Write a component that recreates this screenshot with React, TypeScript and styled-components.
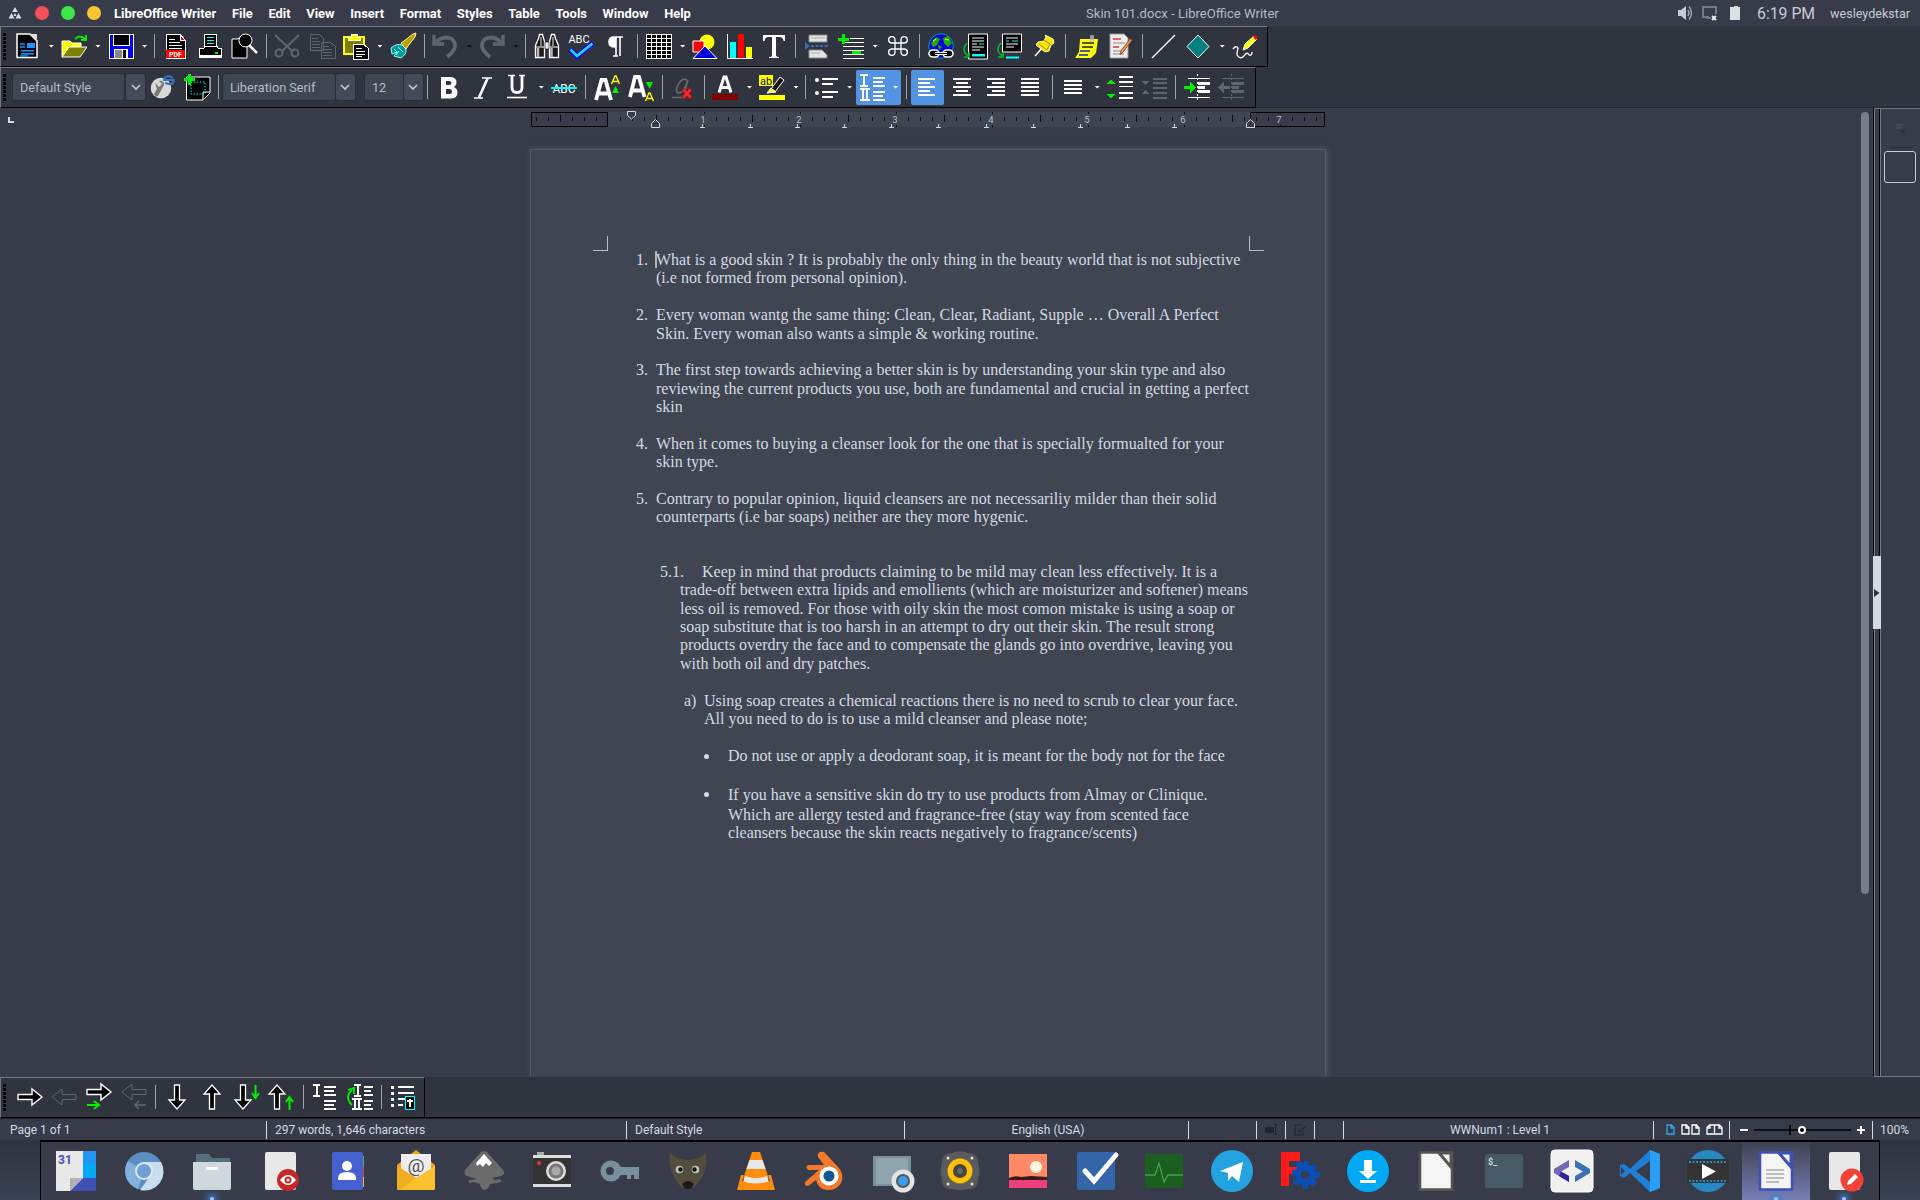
import React from "react";
import styled, { createGlobalStyle, css } from "styled-components";

const Global = createGlobalStyle`
  * { box-sizing: border-box; }
  body { margin: 0; background: #383c4a; overflow: hidden; }
  svg { display: block; flex: none; overflow: visible; }
`;

const ui = css`font-family: Roboto, "Noto Sans", sans-serif;`;

const Screen = styled.div`
  ${ui}
  width: 1920px;
  height: 1200px;
  display: flex;
  flex-direction: column;
  background: #383c4a;
  color: #d3dae3;
  font-size: 12px;
  overflow: hidden;
`;

/* ---------- top panel ---------- */
const Panel = styled.header`
  height: 26px;
  flex: none;
  display: flex;
  align-items: center;
  padding: 0 7px 0 8px;
`;
const Logo = styled.svg`
  width: 14px;
  height: 12px;
  margin-right: 13px;
`;
const Light = styled.i<{ $c: string }>`
  width: 14px;
  height: 14px;
  border-radius: 50%;
  margin-right: 12px;
  background: ${(p) => p.$c};
`;
const Menu = styled.nav`
  display: flex;
  justify-content: space-between;
  width: 577px;
  margin-left: 1px;
  font-weight: 700;
  color: #fff;
  font-size: 12.9px;
  white-space: nowrap;
`;
const Title = styled.div`
  width: 196px;
  margin-left: 395px;
  font-size: 13.1px;
  color: #b4bac6;
  white-space: nowrap;
`;
const Tray = styled.div`
  margin-left: auto;
  display: flex;
  align-items: center;
  color: #c5cad4;
`;
const Clock = styled.span`
  font-size: 15.8px;
  width: 58px;
  margin: 0 15px 0 16px;
  white-space: nowrap;
`;
const User = styled.span`
  font-size: 12.6px;
  width: 83px;
  white-space: nowrap;
`;

/* ---------- toolbars ---------- */
const ToolArea = styled.div`
  flex: none;
  background: #2f343f;
  border-bottom: 1px solid #21252b;
  height: 82px;
`;
const Bar = styled.div<{ $w: number; $gap?: number }>`
  width: ${(p) => p.$w}px;
  height: 41px;
  display: flex;
  align-items: center;
  gap: ${(p) => p.$gap ?? 0}px;
  padding-bottom: 1px;
  background: #2f343f;
  border: 1px solid #000;
  border-top-color: #747883;
  border-left-color: #747883;
`;
const Grip = styled.i<{ $after: number }>`
  flex: none;
  width: 3px;
  height: 27px;
  margin: 0 ${(p) => p.$after}px 0 2px;
  background: repeating-linear-gradient(#000 0 3px, #2f343f 3px 4px);
`;
const Slot = styled.span<{ $on?: boolean; $tight?: boolean }>`
  flex: none;
  width: 33px;
  height: 35px;
  margin: 0 ${(p) => (p.$tight ? -0.8 : 0.7)}px 0 0.7px;
  display: flex;
  align-items: center;
  justify-content: center;
  border-radius: 2px;
  background: ${(p) => (p.$on ? "#5294e2" : "transparent")};
`;
const Split = styled.span`
  flex: none;
  display: flex;
  align-items: center;
  width: 44.6px;
  margin: 0 1px;
  height: 35px;
  border-radius: 2px;
  background: #5294e2;
`;
const Caret = styled.i<{ $dim?: boolean }>`
  flex: none;
  width: 6px;
  height: 3px;
  margin: 0 2.4px 0 3.8px;
  background: ${(p) => (p.$dim ? "#0c0e12" : "#fff")};
  clip-path: polygon(0 0, 100% 0, 50% 100%);
`;
const Sep = styled.i`
  flex: none;
  width: 1px;
  height: 24px;
  margin: 0 3.5px 0 4px;
  background: #9da1aa;
`;
const Combo = styled.div<{ $f: number; $ml?: number; $gap?: number }>`
  flex: none;
  display: grid;
  grid-template-columns: ${(p) => p.$f}px 19px;
  gap: ${(p) => p.$gap ?? 1}px;
  height: 26px;
  margin-left: ${(p) => p.$ml ?? 0}px;
  color: #b6bbc5;
  font-size: 12.7px;
  > span {
    display: flex;
    align-items: center;
    padding-left: 7px;
    background: #404552;
    border-radius: 2px;
    white-space: nowrap;
    box-shadow: 0 0 0 1px #2b2e39;
  }
  > span + span { padding: 0; justify-content: center; background: #444a58; }
`;

/* ---------- workspace ---------- */
const Work = styled.main`
  flex: none;
  height: 969px;
  display: flex;
`;
const Canvas = styled.div`
  width: 1873px;
  position: relative;
  display: flex;
  flex-direction: column;
  overflow: hidden;
`;
const RulerRow = styled.div`
  height: 41px;
  flex: none;
  display: flex;
  align-items: flex-start;
  padding-top: 3px;
`;
const TabCorner = styled.i`
  width: 6px;
  height: 6px;
  margin: 6px 512px 0 8px;
  border-left: 2px solid #d3dae3;
  border-bottom: 2px solid #d3dae3;
`;
const Page = styled.article`
  flex: 1;
  width: 796px;
  margin-left: 530px;
  background: #404552;
  border: 1px solid #555964;
  border-bottom: 0;
  box-shadow: 1px 0 5px #555b66;
  font-family: "Liberation Serif", "Times New Roman", serif;
  font-size: 16px;
  line-height: 18.4px;
  color: #d3dae3;
  padding-left: 62px;
`;
const Corners = styled.div`
  display: flex;
  justify-content: space-between;
  width: 671px;
  margin: 86px 0 0;
  i { width: 15px; height: 15px; border-bottom: 1px solid #b9bdc4; }
  i:first-child { border-right: 1px solid #b9bdc4; }
  i:last-child { border-left: 1px solid #b9bdc4; }
`;
const Para = styled.div<{ $x: number; $lab: number; $mb?: number }>`
  display: grid;
  grid-template-columns: ${(p) => p.$lab}px auto;
  margin-left: ${(p) => p.$x - 593}px;
  margin-bottom: ${(p) => p.$mb ?? 18.4}px;
`;
const Line = styled.div<{ $w: number; $ml?: number; $h?: number }>`
  width: ${(p) => p.$w}px;
  height: ${(p) => p.$h ?? 18.4}px;
  line-height: ${(p) => p.$h ?? 18.4}px;
  margin-left: ${(p) => p.$ml ?? 0}px;
  white-space: nowrap;
  text-align: justify;
  text-align-last: justify;
`;
const Cursor = styled.i`
  display: block;
  width: 2px;
  height: 17px;
  margin: 0 0 -17px 62px;
  background: #b9b6ae;
`;
const Dot = styled.i`
  width: 5px;
  height: 5px;
  margin-top: 7px;
  border-radius: 50%;
  background: #d3dae3;
`;
const Scroll = styled.i`
  position: absolute;
  left: 1861px;
  top: 4px;
  width: 8px;
  height: 782px;
  border-radius: 4px;
  background: #787c87;
`;
const Splitter = styled.div`
  width: 8px;
  display: flex;
  flex-direction: column;
  justify-content: center;
  border-left: 1px solid #000;
  border-right: 1px solid #747883;
  border-bottom: 1px solid #747883;
  box-shadow: inset 1px 1px #747883, inset -1px 0 #000;
`;
const Handle = styled.div`
  height: 73px;
  width: 8px;
  margin: 1px 0 0 -1px;
  display: flex;
  align-items: center;
  background: #d3dae3;
`;
const Side = styled.aside`
  flex: 1;
  display: flex;
  flex-direction: column;
  align-items: center;
  border-top: 1px solid #747883;
  border-bottom: 1px solid #747883;
  padding-top: 15px;
  hr { width: 22px; height: 1px; border: 0; margin: 13px 0 3px; background: #2a2d37; }
`;
const Deck = styled.i`
  width: 32px;
  height: 32px;
  margin-left: -1px;
  border: 1px solid #c9ccd2;
  border-radius: 3px;
`;

/* ---------- status + dock ---------- */
const BottomArea = styled.div`
  flex: none;
  height: 41px;
  background: #2f343f;
  border-bottom: 1px solid #000;
`;
const Status = styled.footer`
  flex: none;
  height: 22px;
  display: flex;
  align-items: center;
  border-top: 1px solid #15171d;
  font-size: 12px;
`;
const Cell = styled.div<{ $w: number; $pl?: number; $mid?: boolean; $last?: boolean }>`
  flex: none;
  width: ${(p) => p.$w}px;
  height: 18px;
  display: flex;
  align-items: center;
  justify-content: ${(p) => (p.$mid ? "center" : "flex-start")};
  padding-left: ${(p) => p.$pl ?? 0}px;
  border-right: ${(p) => (p.$last ? 0 : 1)}px solid #d3dae3;
  white-space: nowrap;
`;
const Desktop = styled.div`
  flex: 1;
  display: flex;
  justify-content: center;
  background: linear-gradient(#2f3440, #3a4253);
`;
const Dock = styled.div`
  width: 1840px;
  padding: 0 1px;
  display: flex;
  background: #383c4a;
  border: 1px solid #000;
  border-width: 2px 1px 0;
`;
const Launcher = styled.div<{ $active?: boolean; $run?: boolean }>`
  width: 68px;
  flex: none;
  display: flex;
  flex-direction: column;
  align-items: center;
  padding-top: 5px;
  background: ${(p) => (p.$active ? "linear-gradient(#3d4152, #7680b6)" : "none")};
  &::after {
    content: "";
    display: ${(p) => (p.$run ? "block" : "none")};
    width: 4px;
    height: 4px;
    margin-top: 2px;
    border-radius: 2px;
    background: #9cc8ff;
    box-shadow: 0 0 6px 3px #3f7fd0;
  }
`;

/* ---------- icons ---------- */
type P = { children: React.ReactNode; crisp?: boolean };
const I = ({ children, crisp }: P) => (
  <svg width="26" height="26" viewBox="0 0 26 26" fill="none" shapeRendering={crisp ? "crispEdges" : undefined}>{children}</svg>
);
const D = ({ children }: { children: React.ReactNode }) => (
  <svg width="48" height="48" viewBox="0 0 48 48" fill="none">{children}</svg>
);
const W = "#fff", G = "#00f000", Y = "#ffff00", C = "#00ffff", DIM = "#62656e";
const rows = (x: number, w: number, ys: number[], c = W, h = 2) =>
  ys.map((y) => <rect key={`${x}-${y}`} x={x} y={y} width={w} height={h} fill={c} />);

const ic = {
  doc: <I><path d="M3 1h13l7 7v16.500H3z" fill="#000" stroke={W} strokeWidth="1.500" /><path d="M16 1h7v7z" fill="#ddd" />{rows(7, 13, [17, 20], "#1e90ff", 1.6)}<path d="M6 11h5M6 14h5M6 23h8" stroke="#1e90ff" strokeWidth="1.500" /><path d="M13 10h8v5h-8z" fill="#1e90ff" /></I>,
  open: <I><path d="M1 8h8l2 2h9v4H8L2 24H1z" fill={Y} stroke={W} /><path d="M8 14h18l-7 10H1z" fill="#808000" stroke={W} /><path d="M14 6q5-5 10 0M25 2v5h-5" stroke={G} strokeWidth="1.800" /></I>,
  save: <I crisp><path d="M1 1h24v24H1z" fill="#0000f0" stroke={W} /><path d="M5 1h16v11H5z" fill="#000" stroke={W} /><path d="M6 16h14v9H6z" fill={W} /><path d="M7 17h7v8H7z" fill="#888" /><path d="M15 17h3v8h-3z" fill="#000" /></I>,
  pdf: <I crisp><path d="M3 1h14l5 6v18H3z" fill="#000" stroke={W} /><path d="M17 1v6h5z" fill="#f00" stroke={W} /><path d="M6 6h6M6 9h11M6 12h13M6 15h13" stroke={W} /><path d="M3 17h19v8H3z" fill="#f00" /><text x="12.500" y="23.600" fontSize="7" fontWeight="700" textAnchor="middle" fill={W}>PDF</text></I>,
  print: <I crisp><path d="M8 1h11v15H7z" fill="#000" stroke={W} /><path d="M10 4h7M10 7h7M10 10h7M10 13h6" stroke={C} /><path d="M3 15h4l1-2h12l1 2h3v9H2v-9z" fill="#000" stroke={W} /><path d="M3 22h21v2H3z" fill={W} /><path d="M18 19h3v2h-3z" fill={G} /></I>,
  preview: <I><path d="M1 6h6v0q3-5 9 0v19H1z" fill="#000" stroke={W} /><circle cx="14.500" cy="7.500" r="6.500" fill="#000" stroke={W} /><path d="M18 12l8 8" stroke={W} strokeWidth="2.500" /></I>,
  cut: <I><path d="M1 2l17 16M25 2L8 18" stroke={DIM} strokeWidth="2" /><circle cx="5" cy="20" r="3.500" stroke={DIM} strokeWidth="2" /><circle cx="21" cy="20" r="3.500" stroke={DIM} strokeWidth="2" /></I>,
  copy: <I crisp><path d="M1 1h9l4 4v12H1zM12 9h9l5 4v12H12z" fill="#2f343f" stroke={DIM} /><path d="M3 5h6M3 8h8M3 11h8M3 14h8M14 13h6M14 16h9M14 19h9M14 22h9" stroke={DIM} /></I>,
  paste: <I crisp><path d="M1 4h20v17H1z" fill="#808000" stroke={Y} strokeWidth="1.500" /><path d="M5 7V4h3V1h6v3h3v3z" fill={Y} stroke={W} /><path d="M10 11h10l5 4v11H10z" fill="#000" stroke={W} /><path d="M13 15h6M13 18h9M13 21h9M13 23h6" stroke={W} /></I>,
  brush: <I><path d="M1 15q6-5 11-3l4 4q1 5-5 9l-7-2 3-4-5 2z" fill="#009a9a" stroke="#9ff" /><path d="M4 16l4 4M8 14l5 5M6 22l3-4" stroke="#7ff" /><path d="M11 10l3-2 9-7 3-1-1 4-7 9-2 3z" fill="#b8a000" stroke="#fff6a0" /></I>,
  undo: <I><path d="M2 2v9h10" stroke={DIM} strokeWidth="3.500" /><path d="M4 9Q12 2 20 6q8 8-5 18" stroke={DIM} strokeWidth="3.800" /></I>,
  redo: <I><path d="M24 2v9H14" stroke={DIM} strokeWidth="3.500" /><path d="M22 9Q14 2 6 6q-8 8 5 18" stroke={DIM} strokeWidth="3.800" /></I>,
  find: <I><path d="M5.500 1.500h3l2 7v16h-9v-12l3-7zM17.500 1.500h3l1 4 3 7v12h-9v-16z" fill="#1a1a1a" stroke={W} strokeWidth="1.300" /><path d="M11 9h4v7h-4z" fill="#eee" stroke="#000" strokeWidth=".6" /><path d="M2 14h8M16 14h8" stroke={W} /><path d="M4 15v9M17.500 15v9" stroke="#bbb" strokeWidth="2.500" /><path d="M7 4v9M19 4v9" stroke="#999" strokeWidth="1.600" /></I>,
  spell: <I><text x="11" y="9.500" fontSize="11" textAnchor="middle" fill={W}>ABC</text><path d="M2 16l7 7.500L25 10" stroke="#0000ff" strokeWidth="5" /><path d="M2.500 16.500L9 23 24.500 10.500" stroke="#19e0ff" strokeWidth="2.600" /></I>,
  pilcrow: <I><path d="M20 4H11q-5 0-5 5t6 5V4M13 4v19M17 4v19M10 23h5" stroke={W} strokeWidth="1.600" /><path d="M12 4q-6 0-6 5t6 5z" fill={W} /></I>,
  table: <I crisp><path d="M0.500 1h25v25h-25z" fill="#000" /><path d="M0 1.500h26M0 5.500h26M0 9.500h26M0 13.500h26M0 17.500h26M0 21.500h26M0 25.500h26M.5 1v25M5.500 1v25M10.500 1v25M15.500 1v25M20.500 1v25M25.500 1v25" stroke={W} /></I>,
  shapes: <I><circle cx="15" cy="9" r="7.500" fill={Y} /><path d="M1 8h11v11H1z" fill="#f00" stroke={W} /><path d="M13 13l12 12.500H1z" fill="#0000e0" stroke={W} /></I>,
  chart: <I crisp><path d="M3 9h6v16H3z" fill={C} /><path d="M11 1h6v24h-6z" fill="#f00" /><path d="M19 14h6v11h-6z" fill={Y} /><path d="M.5 1v24.500H26" stroke={W} /></I>,
  text: <I><path d="M2 2h22v6h-1.500q-.5-4-4-4H15v18q0 2 3 2v1H8v-1q3 0 3-2V4H7.500q-3.500 0-4 4H2z" fill={W} /></I>,
  brk: <I><path d="M5 2h18v7H5zM5 17h13l5 5v3H5z" fill="#e4e4e4" stroke="#888" /><path d="M7 5h14M7 20h9" stroke="#aaa" /><path d="M7 13h18" stroke="#3a6ab0" strokeWidth="2" strokeDasharray="3 1.500" /><path d="M1 9l5 4-5 4z" fill="#3a6ab0" /></I>,
  field: <I crisp>{rows(12, 14, [5], W, 1)}{rows(5, 21, [9, 13, 17, 21, 25], W, 1)}<path d="M5 1v10M0 6h11" stroke={G} strokeWidth="3" /><path d="M14 18h9v3h-9z" fill={G} /></I>,
  cmd: <I><path d="M10 10H6.500a3.200 3.200 0 1 1 3.500-3.500v13a3.200 3.200 0 1 1-3.500-3.500h13a3.200 3.200 0 1 1-3.500 3.500v-13a3.200 3.200 0 1 1 3.500 3.500z" stroke={W} strokeWidth="1.300" /></I>,
  link: <I><circle cx="13" cy="13" r="12.300" fill="#0000d8" stroke="#00a0a0" /><path d="M3 10l5-6 4 2-3 6-4 2zM15 5l5-2 4 7-4 4-4-4zM10 12l4 2-3 3z" fill="#19b000" /><path d="M5 8l3-2M17 6l4 1" stroke={Y} /><rect x="1" y="17" width="10" height="7" rx="3.500" stroke={W} strokeWidth="1.600" fill="#000" /><rect x="15" y="17" width="10" height="7" rx="3.500" stroke={W} strokeWidth="1.600" fill="#000" /><path d="M7 20.500h12" stroke={W} strokeWidth="3" /><path d="M7 20.500h12" stroke="#000" /></I>,
  foot: <I><path d="M6.500 1h19v25h-19z" fill="#000" stroke={W} /><path d="M10 5h12M10 8h12M10 11h5M10 14h12M10 17h8" stroke={W} /><path d="M17 11h5" stroke={C} /><path d="M10 21h13v2.500H10z" fill={C} /><path d="M5 10q-7 8 2 13M2 24h5v-5" stroke="#00c020" strokeWidth="1.500" /></I>,
  end: <I><path d="M6.500 1h19v18h-19z" fill="#000" stroke={W} /><path d="M10 5h12M10 11h12M10 14h8" stroke={W} /><path d="M10 8h3m3 0h6" stroke={C} /><path d="M10 23.500h13v2H10z" fill={C} /><path d="M5 10q-7 8 2 13M2 24h5v-5" stroke="#00c020" strokeWidth="1.500" /></I>,
  pin: <I><path d="M4 23l8-9" stroke={W} strokeWidth="1.600" /><path d="M14 2l8 4 1 4-3 2-2 6-4 1-9-7 2-3 6-1 2-4z" fill="#ffe600" stroke="#fff7a0" /><path d="M13 7l6 4-3 6M8 11l8 6" stroke="#a89000" /></I>,
  note: <I><path d="M6 6h18l-2 14-5 5H1l4-6z" fill={Y} /><path d="M8 10h12M8 14h11" stroke="#222" strokeWidth="1.400" /><path d="M6 18h10M5 22h9" stroke="#2020d0" strokeWidth="1.400" /><path d="M17 2v7M19 2v6" stroke="#bbb" strokeWidth="1.500" /></I>,
  track: <I><path d="M2 1h14l4 4v20H2z" fill="#eee" stroke="#999" /><path d="M5 6h8M5 14h6" stroke="#e33" strokeWidth="1.500" /><path d="M5 10h12M5 18h8M5 21h11" stroke="#888" /><path d="M24 7l-9 12-3 3 1-4 9-12z" fill="#f29a4a" stroke="#b04a20" /></I>,
  line: <I><path d="M1 25L24 2" stroke={W} strokeWidth="1.500" /></I>,
  diamond: <I><path d="M13 2l11 11.500L13 25 2 13.500z" fill="#008080" stroke={W} /></I>,
  draw: <I><path d="M1 16q3-4 5-1-1 4-1 7 3 5 7 1 3-5 5-1 3 1 3-3" stroke={W} strokeWidth="1.300" /><path d="M11 17l2-6 9-8 3 3-9 9z" fill={Y} stroke={W} /><path d="M22 3l3 3" stroke="#f00" strokeWidth="3" /></I>,
  update: <I><circle cx="12" cy="14" r="10.300" fill="#d8dad8" /><path d="M6 9l4 4 3-3-3-3q5-1 5 4l-6 11q-3 1-4-2l3-5z" fill="#777" /><path d="M15 7q0-5 5-5l4 2M25 5q0 6-5 5l-4-1M16 6h8" stroke="#3a70b8" strokeWidth="2.200" /></I>,
  newst: <I><path d="M2.500 3H26v16l-7 7H2.500z" fill="#000" stroke={W} /><path d="M26 18h-7v8" fill="#000" stroke={W} /><path d="M7 8h14v12H7z" stroke={C} strokeDasharray="1.500 1.500" /><path d="M5.500 0v11M0 5.500h11" stroke={G} strokeWidth="3.200" /></I>,
  bold: <I><path d="M5 3h9q6.500 0 6.500 5.500 0 3-3 4.500 4 1.200 4 5.500 0 6-7 6H5zM10 7v4h3q2.500 0 2.500-2t-2.500-2zM10 15v5h3.500q2.500 0 2.500-2.500T13.500 15z" fillRule="evenodd" fill={W} /></I>,
  italic: <I><path d="M12 4h10M4 24h9M18 4L8.500 24" stroke={W} strokeWidth="1.600" /><path d="M17.500 4.500L9 23.500" stroke={W} strokeWidth="2.600" /></I>,
  under: <I><path d="M4 1.500h7M15 1.500h6" stroke={W} strokeWidth="1.500" /><path d="M8 1.500v12q0 5 5 5t5-5v-12" stroke={W} strokeWidth="2.800" /><path d="M3 23.500h20" stroke={W} strokeWidth="1.600" /></I>,
  strike: <I><text x="13" y="18.500" fontSize="12" textAnchor="middle" fill={W}>ABC</text><path d="M0 14h26" stroke={C} strokeWidth="2" /></I>,
  grow: <I><path d="M2 26L7.500 6h4L17 26M5 19.500h9" stroke={W} strokeWidth="3.800" /><path d="M17.500 10l3.500-8h1l3.500 8M19 7.500h5" stroke={Y} strokeWidth="1.400" /><path d="M21.500 12l3.500 7h-7z" fill={G} /></I>,
  shrink: <I><path d="M2 23L7 3h4l5.500 20M4.500 16.500h9" stroke={W} strokeWidth="3.800" /><path d="M21.500 15l3.500-7h-7z" fill={G} /><path d="M17.500 27l3.500-8h1l3.500 8M19 24.500h5" stroke={Y} strokeWidth="1.400" /></I>,
  clear: <I><path d="M16 6q-5-3-9 5t2 8q4-1 8-13-4 12-1 12" stroke="#6a6c6a" strokeWidth="1.500" /><path d="M1 23.500h11" stroke="#6a6c6a" strokeWidth="1.500" /><path d="M12 15l8 9M20 15l-8 9" stroke="#c00d0d" strokeWidth="4" /><path d="M12.500 15.500l7 8M19.500 15.500l-7 8" stroke="#f03030" strokeWidth="2" /></I>,
  fcolor: <I><path d="M7 18.500L12 3h2l5 15.500M9 13.500h8" stroke={W} strokeWidth="3" /><path d="M0 20h26v6H0z" fill="#800000" /></I>,
  hilite: <I><path d="M0 1h14v11H0z" fill={Y} /><text x="7" y="10.500" fontSize="11" textAnchor="middle" fill="#111">ab</text><path d="M21 3l4 3-9 12-4-3z" fill="#111" stroke={W} /><path d="M12 14l5 4-9 1z" fill={Y} stroke={W} /><path d="M0 21h26v5H0z" fill={Y} /></I>,
  bullets: <I><circle cx="3" cy="6" r="2" fill={W} /><circle cx="3" cy="19" r="2" fill={W} /><g shapeRendering="crispEdges">{rows(8, 16, [4, 17])}{rows(8, 11, [9, 22])}</g></I>,
  number: <I crisp><path d="M0 1h8M4 1v11M0 12h8M0 15h10M3 15v11M7 15v11M0 26h10" stroke={W} strokeWidth="2" />{rows(13, 12, [3, 11, 17, 25])}{rows(13, 10, [7, 21])}</I>,
  left: <I crisp>{rows(4, 17, [4, 12, 20])}{rows(4, 12, [8, 16])}</I>,
  center: <I crisp>{rows(4, 18, [4, 12, 20])}{rows(7, 12, [8, 16])}</I>,
  right: <I crisp>{rows(4, 18, [4, 12, 20])}{rows(9, 13, [8, 16])}</I>,
  just: <I crisp>{rows(4, 18, [4, 8, 12, 16, 20])}</I>,
  spacing: <I crisp>{rows(4, 18, [6, 10, 14, 18])}</I>,
  inc: <I crisp>{rows(12, 14, [2, 7, 18, 23])}{rows(12, 14, [12], W, 1)}<path d="M4 5l4 5H0zM4 25l4-5H0z" fill={G} /></I>,
  dec: <I crisp>{rows(12, 14, [4, 8, 13, 18, 23], DIM, 1.500)}<path d="M4 11l4-4H0zM4 16l4 4H0z" fill={DIM} /></I>,
  ind: <I crisp>{rows(4, 22, [4, 23], W, 1)}{rows(14, 12, [8, 16], W, 3)}{rows(14, 7, [12], W, 3)}<path d="M13 0v26" stroke={W} strokeDasharray="2 2" /><path d="M0 12h6V8l6 5.500L6 19v-4H0z" fill={G} /></I>,
  ded: <I crisp>{rows(4, 22, [4, 23], DIM, 1)}{rows(14, 12, [8, 16], DIM, 3)}{rows(14, 7, [12], DIM, 3)}<path d="M13 0v26" stroke={DIM} strokeDasharray="2 2" /><path d="M12 12H6V8l-6 5.500L6 19v-4h6z" fill={DIM} /></I>,
};
const R = "M1 10.500h14V5l10 8-10 8v-5.500H1z", L = "M25 10.500H11V5L1 13l10 8v-5.500h14z";
const bt = {
  r: <I><path d={R} fill="#000" stroke={W} strokeWidth="1.400" /></I>,
  l: <I><path d={L} stroke={DIM} /></I>,
  r2: <I><path d={R} transform="translate(0 -5)" fill="#000" stroke={W} strokeWidth="1.400" /><path d="M1 21h11M8 17l5 4-5 4" stroke={G} strokeWidth="2" /></I>,
  l2: <I><path d={L} transform="translate(0 -5)" stroke={DIM} /><path d="M25 21H14M18 17l-4 4 4 4" stroke={DIM} strokeWidth="1.500" /></I>,
  d: <I><path d="M10.500 1h5v15H21l-8 9-8-9h5.500z" fill="#000" stroke={W} strokeWidth="1.300" /></I>,
  u: <I><path d="M10.500 25h5V10H21l-8-9-8 9h5.500z" fill="#000" stroke={W} strokeWidth="1.300" /></I>,
  d2: <I><path d="M6.500 1h5v15H17l-8 9-8-9h5.500z" fill="#000" stroke={W} strokeWidth="1.300" /><path d="M21.500 1v12M18 9l3.500 5L25 9" stroke={G} strokeWidth="2" /></I>,
  u2: <I><path d="M6.500 25h5V10H17L9 1 1 10h5.500z" fill="#000" stroke={W} strokeWidth="1.300" /><path d="M21.500 26V14M18 18l3.500-5 3.500 5" stroke={G} strokeWidth="2" /></I>,
  n1: <I crisp><path d="M1 1h7M4.500 1v11M1 12h7" stroke={W} strokeWidth="2" />{rows(12, 12, [2, 10, 16, 24])}{rows(12, 10, [6, 20])}</I>,
  n2: <I><path d="M5 21Q-3 13 5 6M1 6l6-2v6" stroke={G} strokeWidth="1.800" /><g shapeRendering="crispEdges"><path d="M7 1h7M10.500 1v11M7 12h7M5 15h10M8 15v10M12 15v10M5 25h10" stroke={W} strokeWidth="2" />{rows(17, 9, [2, 10, 16, 24])}{rows(17, 7, [6, 20])}</g></I>,
  opt: <I crisp>{[2, 8, 14, 20].map((y) => <rect key={y} x="1" y={y} width="3" height="3" fill={W} />)}{rows(8, 16, [2, 8])}{rows(8, 11, [14])}{rows(8, 5, [20])}<path d="M15.500 12.500h9v13h-9z" fill="#000" stroke={C} strokeWidth="1.500" /><path d="M20 15v8M17 17h6" stroke={W} strokeWidth="1.500" /></I>,
};

type Key = keyof typeof ic;
const standard: (Key | "|" | "v" | "V")[] = [
  "doc", "v", "open", "v", "save", "v", "|", "pdf", "print", "preview", "|", "cut", "copy", "paste", "v", "brush", "|",
  "undo", "V", "redo", "V", "|", "find", "spell", "pilcrow", "|", "table", "v", "shapes", "chart", "text", "|", "brk",
  "field", "v", "cmd", "|", "link", "foot", "end", "pin", "|", "note", "track", "|", "line", "diamond", "v", "draw",
];
const format: (Key | "|" | "v" | "V")[] = [
  "|", "bold", "italic", "under", "v", "strike", "|", "grow", "shrink", "|", "clear", "|", "fcolor", "v", "hilite", "v", "|",
  "bullets", "v", "number", "|", "left", "center", "right", "just", "|", "spacing", "v", "inc", "dec", "|", "ind", "ded",
];
const Tools = ({ list }: { list: (Key | "|" | "v" | "V")[] }) => (
  <>
    {list.map((k, i) => {
      if (k === "|") return <Sep key={i} />;
      if (k === "v" || k === "V") return <Caret key={i} $dim={k === "V"} />;
      if (k === "number") return <Split key={i}><Slot $tight>{ic[k]}</Slot><Caret /></Split>;
      return <Slot key={i} $on={k === "left"} $tight={k === "clear" || k === "bullets"}>{ic[k]}</Slot>;
    })}
  </>
);
const Chevron = () => (
  <svg width="10" height="7" viewBox="0 0 10 7"><path d="M1 1l4 4 4-4" fill="none" stroke="#c3c8d1" strokeWidth="1.700" /></svg>
);

/* ---------- ruler ---------- */
const Ruler = () => {
  const ticks: React.ReactNode[] = [];
  for (let n = -6; n <= 59; n++) {
    const x = Math.round(81.5 + n * 12) + 0.5;
    if (n === 0) continue;
    if (n % 8 === 0) ticks.push(<path key={n} d={`M${x} 1v2M${x} 14v2`} />);
    else ticks.push(<path key={n} d={n % 4 === 0 ? `M${x} 4v7` : `M${x} 6v4`} />);
  }
  return (
    <svg width="804" height="18" viewBox="0 0 804 18" fill="none">
      <path d="M82 1h642v15H82z" fill="#404552" />
      <path d="M5.500 1.500h76v14h-76zM724.500 1.500h74v14h-74z" stroke="#000" />
      <g stroke="#0b0c10">{ticks}</g>
      {[1, 2, 3, 4, 5, 6, 7].map((n) => (
        <text key={n} x={81 + n * 96} y="12.200" fontSize="9.500" textAnchor="middle" fill="#b8bfca">{n}</text>
      ))}
      {[0, 1, 2, 3, 4, 5, 6, 7, 8, 9, 10].map((n) => {
        const x = Math.round(176.3 + n * 47.200) + 0.5;
        return <path key={n} d={`M${x} 13v3M${x - 2.500} 16.500h5`} stroke="#d3dae3" />;
      })}
      <path d="M101.500 .5h8v4l-4 3.500-4-3.500z" fill="#383c4a" stroke="#d3dae3" />
      <path d="M125.500 16.500v-4l4-4 4 4v4zM720.500 16.500v-4l4-4 4 4v4z" fill="#383c4a" stroke="#d3dae3" />
    </svg>
  );
};

const numbered: [string, [string, number][], number][] = [
  ["1.", [["What is a good skin ? It is probably the only thing in the beauty world that is not subjective", 584], ["(i.e not formed from personal opinion).", 250.5]], 18.4],
  ["2.", [["Every woman wantg the same thing: Clean, Clear, Radiant, Supple … Overall A Perfect", 562.5], ["Skin. Every woman also wants a simple & working routine.", 381]], 18.4],
  ["3.", [["The first step towards achieving a better skin is by understanding your skin type and also", 569], ["reviewing the current products you use, both are fundamental and crucial in getting a perfect", 593], ["skin", 26]], 18.4],
  ["4.", [["When it comes to buying a cleanser look for the one that is specially formualted for your", 567], ["skin type.", 62]], 18.4],
  ["5.", [["Contrary to popular opinion, liquid cleansers are not necessariliy milder than their solid", 560.5], ["counterparts (i.e bar soaps) neither are they more hygenic.", 372]], 36],
];

/* ---------- dock icons ---------- */
const dock: { i: React.ReactNode; run?: boolean; active?: boolean }[] = [
  { i: <D><path d="M4 4h40v40H4z" fill="#e8e8e8" /><path d="M31 4h13v27H31z" fill="#2196f3" /><path d="M31 17h13v14H31z" fill="#03a9f4" /><path d="M18 44l13-13h13v13z" fill="#3f51b5" /><path d="M18 44V31h13z" fill="#b0b0b0" /><text x="13" y="16.500" fontSize="12" fontWeight="700" textAnchor="middle" fill="#3f51b5">31</text></D> },
  { i: <D><circle cx="24" cy="24" r="19" fill="#5b8fc4" /><path d="M24 24L8 14a19 19 0 0 0 10 28z" fill="#82b1dd" /><path d="M24 15h17a19 19 0 0 1-21 28l10-14z" fill="#c9dcf0" /><circle cx="24" cy="24" r="9" fill="#dfe9f5" /><circle cx="24" cy="24" r="7" fill="#6f9ed6" /></D> },
  { i: <D><path d="M8 7h13l3 4h18v8H8z" fill="#54707c" /><path d="M5 15h38v26q0 2-2 2H7q-2 0-2-2z" fill="#cfd8dc" /><path d="M18 20h12v3H18z" fill="#fff" /></D>, run: true },
  { i: <D><rect x="9" y="5" width="31" height="38" rx="2" fill="#e8e8e8" /><circle cx="32" cy="33" r="11" fill="#c62828" /><path d="M24 33q8-10 16 0-8 10-16 0z" fill="#fff" /><circle cx="32" cy="33" r="3.500" fill="#c62828" /><circle cx="32" cy="33" r="1.500" fill="#fff" /></D> },
  { i: <D><path d="M36 9h4v11h-4z" fill="#4caf50" /><path d="M36 20h4v10h-4z" fill="#e53935" /><path d="M36 30h4v10h-4z" fill="#ffc107" /><rect x="8" y="5" width="31" height="38" rx="2" fill="#4460d0" /><circle cx="23" cy="19" r="5" fill="#fff" /><path d="M14 33v-2q0-6 9-6t9 6v2z" fill="#fff" /></D> },
  { i: <D><path d="M5 18L24 3l19 15v23q0 2-2 2H7q-2 0-2-2z" fill="#f6a21a" /><path d="M9 7h30v30H9z" fill="#eee" /><text x="24" y="25" fontSize="19" textAnchor="middle" fill="#555">@</text><path d="M5 19l19 12 19-12v22q0 2-2 2H7q-2 0-2-2z" fill="#fbc02d" /><path d="M5 19l19 12L7 43q-2 0-2-2z" fill="#f0ad20" /></D> },
  { i: <D><path d="M24 4q3 0 5 3l14 16q3 4-2 6l-9 2 3 2 4-1q6 2-2 4l-7 1q-1 5-6 6-4-2-4-6l-6-2-4 1q-4-2 1-3l5-1-9-3q-4-2-2-6L19 7q2-3 5-3z" fill="#6b6b6b" /><path d="M24 7l8 9-3 3-3-3-3 4-3-3-3 2-1-3z" fill="#fff" /></D> },
  { i: <D><rect x="5" y="8" width="38" height="32" rx="2" fill="#333" /><path d="M5 8h38v3H5zM5 37h38v3H5z" fill="#ddd" /><path d="M9 5h7v3H9z" fill="#aaa" /><circle cx="11" cy="16" r="2" fill="#e33" /><circle cx="28" cy="24" r="10" fill="#ddd" /><circle cx="28" cy="24" r="7.500" fill="#777" /><circle cx="28" cy="24" r="4.500" fill="#aaa" /></D> },
  { i: <D><circle cx="15" cy="24" r="10.500" fill="#78909c" /><circle cx="14" cy="24" r="4" fill="#383c4a" /><path d="M23 20h20v12h-5v-4h-3v4h-4v-4h-8z" fill="#78909c" /></D> },
  { i: <D><path d="M6 6q8 7 18 7T42 6q2 13-3 22-4 8-10 13H19q-6-4-10-13Q4 18 6 6z" fill="#544c3c" /><circle cx="15.500" cy="22.500" r="3.800" fill="#c4c2bc" /><circle cx="31.500" cy="22.500" r="3.800" fill="#c4c2bc" /><circle cx="16.500" cy="22.500" r="2.200" fill="#111" /><circle cx="30.500" cy="22.500" r="2.200" fill="#111" /><path d="M18 37q6-6 12 0l-3 5h-6z" fill="#1d1a16" /></D> },
  { i: <D><path d="M20 5h8l9 27H11z" fill="#ff8c0a" /><path d="M17.500 13h13l3 9h-19z" fill="#e8e8e8" /><path d="M13 29q11 4 22 0l2 6q-13 5-26 0z" fill="#e8e8e8" /><path d="M9 28h3l-2 6q14 5 28 0l-2-6h3l4 15H5z" fill="#ff8c0a" /></D> },
  { i: <D><path d="M20 5q3-1 5 1l13 14q7 8 3 16-5 8-14 7-9-1-11-10L8 39q-4 0-3-4l14-12H8q-3-3 0-5h16l-6-8q-1-4 2-5z" fill="#f5792a" /><circle cx="29" cy="29" r="9.500" fill="#fff" /><circle cx="29" cy="29" r="5.500" fill="#105a8f" /></D> },
  { i: <D><path d="M5 9h38v30H5z" fill="#78909c" /><path d="M8 11h32v26H8z" fill="#90a4ae" /><circle cx="35" cy="34" r="11.500" fill="#e4e4e4" /><circle cx="35" cy="34" r="7" fill="#555" /><circle cx="35" cy="34" r="5" fill="#3b9cf0" /></D> },
  { i: <D><rect x="6" y="6" width="36" height="36" rx="8" fill="#555" /><circle cx="24" cy="24" r="19.500" fill="#5c5c5c" /><circle cx="24" cy="24" r="12.500" fill="#ffc107" /><circle cx="24" cy="24" r="7" fill="#444" /><circle cx="24" cy="24" r="3" fill="#666" />{[[12, 11], [36, 11], [12, 37], [36, 37]].map(([x, y]) => <circle key={`${x}${y}`} cx={x} cy={y} r="1.500" fill="#ddd" />)}</D> },
  { i: <D><path d="M5 7h38v25H5z" fill="#ff8a65" /><path d="M5 31h38v10H5z" fill="#ec407a" /><path d="M5 31q6-3 12-1l10-1 16 1v3H5z" fill="#3a1a1a" /><circle cx="32" cy="20" r="6" fill="#fff3e0" /></D> },
  { i: <D><rect x="5" y="5" width="38" height="38" rx="2" fill="#3465a8" /><path d="M13 24l9 10L44 8" stroke="#fff" strokeWidth="5" strokeLinecap="round" /></D> },
  { i: <D><path d="M5 7h38v34H5z" fill="#1b5e20" /><path d="M5 28h10l4-12 5 19 4-7h15" stroke="#43a047" strokeWidth="1.300" /></D> },
  { i: <D><circle cx="24" cy="24" r="21" fill="#22a3e0" /><path d="M12 24l23-9-4 20-7-6-4 5v-8z" fill="#fff" /></D> },
  { i: <D><path d="M5 5h19v9H13v6h8v7h-8v12H5z" fill="#ff1a1a" /><path d="M28 14h5v5l5-2 3 4-4 3 7 1v5l-6 1 3 5-4 3-5-3v6h-5l-1-6-6 3-3-4 4-5-5-2v-5l6-1-3-5 4-3 5 3z" fill="#0a4fb8" /><circle cx="29" cy="28" r="4" fill="#383c4a" /></D> },
  { i: <D><circle cx="24" cy="24" r="21" fill="#03a9f4" /><path d="M20 13h8v11h5l-9 8-9-8h5zM16 33h16v3H16z" fill="#fff" /></D> },
  { i: <D><path d="M8 5.500h32v37H8z" fill="#f5f5f5" stroke="#555550" strokeWidth="2.500" /><path d="M27 6h12v14z" fill="#f5f5f5" stroke="#555550" strokeWidth="3" /></D> },
  { i: <D><rect x="5" y="7" width="38" height="34" rx="2" fill="#455a64" /><text x="8" y="18" fontSize="9" fontWeight="700" fill="#cfd8dc">$_</text></D> },
  { i: <D><rect x="3" y="3" width="42" height="42" rx="4" fill="#f0f0f0" stroke="#fff" /><path d="M21 13v7l-8 4.500 8 4.500v6L6 26v-4z" fill="#7466b4" /><path d="M13 24.500l8 4.500v6L11 29z" fill="#35209a" /><path d="M27 13v7l8 4.500-8 4.500v6l15-9v-4z" fill="#3a70b4" /></D> },
  { i: <D><path d="M34 3l10 4v34l-10 4L14 26l-6 5-4-2V18l4-1 6 5z" fill="#1f7fd6" /><path d="M34 14L20 24l14 11z" fill="#383c4a" /><path d="M34 3l10 4v34l-10 4z" fill="#2a9df4" /><path d="M9 24l-4 4v-8z" fill="#383c4a" /></D> },
  { i: <D><circle cx="24" cy="24" r="21" fill="#2688c4" /><path d="M3 12h42v24H3z" fill="#333" /><path d="M5 15h38M5 34h38" stroke="#2688c4" strokeWidth="2" strokeDasharray="2 1.500" /><path d="M18 17l14 7.500L18 32z" fill="#fff" /></D> },
  { i: <D><path d="M8 5.500h32v37H8z" fill="#f5f5f5" stroke="#3f51b5" strokeWidth="2.500" /><path d="M27 6h12v14z" fill="#f5f5f5" stroke="#3f51b5" strokeWidth="3" /><path d="M14 23h18M14 27h18M14 31h18M14 35h13" stroke="#bbb" strokeWidth="2" /></D>, run: true, active: true },
  { i: <D><rect x="9" y="5" width="31" height="38" rx="2" fill="#e8e8e8" /><circle cx="32" cy="33" r="11.500" fill="#f44336" /><path d="M27 38l1-4 7-7 3 3-7 7z" fill="#fff" /></D>, run: true },
];

const Sheet = ({ c = "#fff" }: { c?: string }) => (
  <svg width="9" height="11" viewBox="0 0 9 11"><path d="M1 1h4.500L8 3.500V10H1zM5 1v3h3" fill="none" stroke={c} strokeWidth="1.300" /></svg>
);
const Views = styled.div`
  display: flex;
  gap: 1px;
  margin-left: 12px;
  svg:nth-child(2), svg:nth-child(4) { margin-left: 5px; }
`;

export default function App() {
  return (
    <Screen>
      <Global />
      <Panel>
        <Logo viewBox="0 0 14 12"><path d="M7 0l2.800 5H4.200zM3.500 6l3 5.500H.5zM10.500 6l3 5.500h-6zM7 6l1.500 3h-3z" fill="#d8dbe0" /></Logo>
        <Light $c="#f74f57" /><Light $c="#3be54a" /><Light $c="#fdc431" />
        <Menu>
          {["LibreOffice Writer", "File", "Edit", "View", "Insert", "Format", "Styles", "Table", "Tools", "Window", "Help"].map((m) => <span key={m}>{m}</span>)}
        </Menu>
        <Title>Skin 101.docx - LibreOffice Writer</Title>
        <Tray>
          <svg width="64" height="16" viewBox="0 0 64 16" fill="none">
            <path d="M1 5h3l5-4v14l-5-4H1z" fill="#c5cad4" /><path d="M11 5q2 3 0 6M12 1.500q5 6.500 0 13" stroke="#9aa0ac" strokeWidth="1.500" />
            <path d="M32 12h-6V2h13v7M29 13h5" stroke="#747985" strokeWidth="2" /><path d="M35 11l4 4M39 11l-4 4" stroke="#eee" strokeWidth="1.800" />
            <path d="M55 2h2V1h4v1h2v13H53V2z" fill="#dde0e5" />
          </svg>
          <Clock>6:19 PM</Clock>
          <User>wesleydekstar</User>
        </Tray>
      </Panel>

      <ToolArea>
        <Bar $w={1268}><Grip $after={4.2} /><Tools list={standard} /></Bar>
        <Bar $w={1256}>
          <Grip $after={7} />
          <Combo $f={111} $gap={2}><span>Default Style</span><span><Chevron /></span></Combo>
          <Slot>{ic.update}</Slot><Slot>{ic.newst}</Slot><Sep />
          <Combo $f={112} $ml={0.7}><span>Liberation Serif</span><span><Chevron /></span></Combo>
          <Combo $f={38} $ml={10}><span>12</span><span><Chevron /></span></Combo>
          <Tools list={format} />
        </Bar>
      </ToolArea>

      <Work>
        <Canvas>
          <RulerRow><TabCorner /><Ruler /></RulerRow>
          <Page>
            <Corners><i /><i /></Corners>
            <Cursor />
            {numbered.map(([n, lines, mb]) => (
              <Para key={n} $x={636} $lab={20} $mb={mb}>
                <span>{n}</span>
                <div>{lines.map(([t, w]) => <Line key={t} $w={w}>{t}</Line>)}</div>
              </Para>
            ))}
            <Para $x={660} $lab={20}>
              <span>5.1.</span>
              <div>
                <Line $w={515} $ml={22}>Keep in mind that products claiming to be mild may clean less effectively. It is a</Line>
                <Line $w={567}>trade-off between extra lipids and emollients (which are moisturizer and softener) means</Line>
                <Line $w={553.500}>less oil is removed. For those with oily skin the most comon mistake is using a soap or</Line>
                <Line $w={534}>soap substitute that is too harsh in an attempt to dry out their skin. The result strong</Line>
                <Line $w={551}>products overdry the face and to compensate the glands go into overdrive, leaving you</Line>
                <Line $w={189.500}>with both oil and dry patches.</Line>
              </div>
            </Para>
            <Para $x={684} $lab={20}>
              <span>a)</span>
              <div>
                <Line $w={533.500}>Using soap creates a chemical reactions there is no need to scrub to clear your face.</Line>
                <Line $w={383}>All you need to do is to use a mild cleanser and please note;</Line>
              </div>
            </Para>
            <Para $x={704} $lab={24} $mb={20}>
              <Dot />
              <Line $w={495.500}>Do not use or apply a deodorant soap, it is meant for the body not for the face</Line>
            </Para>
            <Para $x={704} $lab={24}>
              <Dot />
              <div>
                <Line $w={478} $h={19.500}>If you have a sensitive skin do try to use products from Almay or Clinique.</Line>
                <Line $w={459} $h={19.500}>Which are allergy tested and fragrance-free (stay way from scented face</Line>
                <Line $w={408.500}>cleansers because the skin reacts negatively to fragrance/scents)</Line>
              </div>
            </Para>
          </Page>
          <Scroll />
        </Canvas>
        <Splitter><Handle><svg width="8" height="8" viewBox="0 0 8 8"><path d="M1 0l5.500 4L1 8z" fill="#2f343f" /></svg></Handle></Splitter>
        <Side>
          <svg width="10" height="10" viewBox="0 0 10 10"><path d="M0 1h6M0 4h6" stroke="#46597c" /><path d="M3 6h7L6.500 9.500z" fill="#20304f" /></svg>
          <hr />
          <Deck />
        </Side>
      </Work>

      <BottomArea>
        <Bar $w={425} $gap={0.35}>
          <Grip $after={6} />
          <Slot>{bt.r}</Slot><Slot>{bt.l}</Slot><Slot>{bt.r2}</Slot><Slot>{bt.l2}</Slot><Sep />
          <Slot>{bt.d}</Slot><Slot>{bt.u}</Slot><Slot>{bt.d2}</Slot><Slot>{bt.u2}</Slot><Sep />
          <Slot>{bt.n1}</Slot><Slot>{bt.n2}</Slot><Sep /><Slot>{bt.opt}</Slot>
        </Bar>
      </BottomArea>

      <Status>
        <Cell $w={267} $pl={10}>Page 1 of 1</Cell>
        <Cell $w={360} $pl={8}>297 words, 1,646 characters</Cell>
        <Cell $w={278} $pl={8}>Default Style</Cell>
        <Cell $w={284} $mid $pl={3}>English (USA)</Cell>
        <Cell $w={68} />
        <Cell $w={29} $mid><svg width="12" height="11" viewBox="0 0 12 11"><path d="M0 3h9v6H0z" fill="#22252e" /><path d="M10.500 1v9M9 .5h3M9 10.500h3" stroke="#22252e" /></svg></Cell>
        <Cell $w={29} $mid><svg width="12" height="12" viewBox="0 0 12 12"><path d="M9 8v3H1V1h8M4 6l2 2 5-5" fill="none" stroke="#22252e" strokeWidth="1.200" /></svg></Cell>
        <Cell $w={29} />
        <Cell $w={310} $mid $pl={3}>WWNum1 : Level 1</Cell>
        <Cell $w={76}><Views><Sheet c="#2ea8e5" /><Sheet /><Sheet /><svg width="17" height="11" viewBox="0 0 17 11"><path d="M8.500 1v9H1V3.500L3.500 1h10L16 3.500V10H8.500M4 1v3H1M13 1v3h3" fill="none" stroke="#fff" strokeWidth="1.300" /></svg></Views></Cell>
        <Cell $w={143} $pl={10}>
          <svg width="126" height="12" viewBox="0 0 126 12"><path d="M0 6h8M117 6h8M121 2v8" stroke="#fff" strokeWidth="2" /><path d="M14 6h97M50 1v10" stroke="#000" strokeWidth="1.700" /><circle cx="62" cy="6" r="3" fill="#000" stroke="#fff" strokeWidth="2" /></svg>
        </Cell>
        <Cell $w={47} $pl={7} $last>100%</Cell>
      </Status>

      <Desktop>
        <Dock>
          {dock.map((d, i) => <Launcher key={i} $run={d.run} $active={d.active}>{d.i}</Launcher>)}
        </Dock>
      </Desktop>
    </Screen>
  );
}
